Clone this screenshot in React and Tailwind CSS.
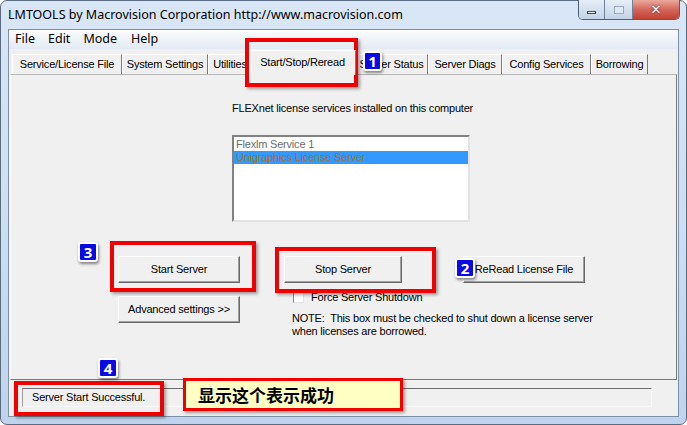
import React from 'react';

const Badge = ({ n, className }) => (
  <div
    className={`absolute flex items-center justify-center rounded-[3px] border-2 border-white bg-[#0a0ae6] text-[15px] font-bold leading-none text-white shadow-[1px_2px_3px_rgba(0,0,0,0.45)] ${className}`}
  >
    {n}
  </div>
);

const RedBox = ({ className }) => (
  <div
    className={`pointer-events-none absolute border-[4px] border-[#f00000] shadow-[2px_2px_3px_rgba(0,0,0,0.35)] ${className}`}
  />
);

const Button = ({ children, className = '' }) => (
  <div
    className={`flex h-[27px] shrink-0 items-center justify-center whitespace-nowrap border border-b-[#696969] border-l-white border-r-[#696969] border-t-white bg-[#f0f0f0] shadow-[inset_-1px_-1px_0_#a0a0a0] ${className}`}
  >
    {children}
  </div>
);

const App = () => {
  const tabs = [
    { label: 'Service/License File', w: 'w-[110px]' },
    { label: 'System Settings', w: 'w-[86px]' },
    { label: 'Utilities', w: 'w-[44px]' },
    { label: 'Start/Stop/Reread', w: 'w-[107px]', active: true },
    { label: 'Server Status', w: 'w-[73px]' },
    { label: 'Server Diags', w: 'w-[74px]' },
    { label: 'Config Services', w: 'w-[89px]' },
    { label: 'Borrowing', w: 'w-[57px]' },
  ];

  return (
    <div className="relative h-[425px] w-[687px] overflow-hidden bg-white">
      {/* Window frame */}
      <div className="flex h-full flex-col rounded-[7px] border border-[#5b6b80] bg-gradient-to-b from-[#d9e6f6] via-[#cddff3] to-[#bfd3ec] px-[7px] pb-[7px]">
        {/* Title bar */}
        <div className="relative flex h-[28px] items-center">
          <span className="text-[12.5px] text-black [font-family:'Noto_Sans',sans-serif]">
            LMTOOLS by Macrovision Corporation http://www.macrovision.com
          </span>
          <div className="absolute right-[-1px] top-[-1px] flex h-[20px] overflow-hidden rounded-b-[5px] border border-t-0 border-[#4f6079]">
            <div className="flex w-[26px] items-end justify-center border-r border-[#6f819b] bg-gradient-to-b from-[#e6eef8] to-[#c3d3e7] pb-[5px]">
              <div className="h-[3px] w-[9px] border border-[#3b4a60] bg-white" />
            </div>
            <div className="flex w-[28px] items-center justify-center border-r border-[#6f819b] bg-gradient-to-b from-[#e6eef8] to-[#c3d3e7]">
              <div className="h-[8px] w-[10px] border border-[#9aa9bd] bg-[#dfe7f1]" />
            </div>
            <div className="flex w-[46px] items-center justify-center bg-gradient-to-b from-[#e9a99c] via-[#d4665a] to-[#c2402f] text-[13px] font-bold leading-none text-white [font-family:'DejaVu_Sans',sans-serif] [text-shadow:0_0_2px_#5a1a10]">
              ✕
            </div>
          </div>
        </div>

        {/* Client area */}
        <div className="flex flex-1 flex-col border border-[#7e90a8] bg-[#f0f0f0] text-[11px] tracking-[-0.2px] text-black [font-family:'Liberation_Sans',Arial,sans-serif]">
          {/* Menu bar */}
          <div className="flex h-[19px] items-center gap-[13px] bg-gradient-to-b from-[#fbfcfe] to-[#e3eaf4] pl-[6px] text-[12.5px] tracking-normal [font-family:'Noto_Sans',sans-serif]">
            <span>File</span>
            <span>Edit</span>
            <span className="mr-[1px]">Mode</span>
            <span>Help</span>
          </div>

          {/* Tab strip */}
          <div className="flex h-[25px] items-end pl-[3px]">
            {tabs.map((t) =>
              t.active ? (
                <div
                  key={t.label}
                  className={`relative z-10 -mb-[1px] -ml-[3px] -mr-[1px] flex h-[25px] shrink-0 items-center justify-center border border-b-0 border-l-white border-r-[#7a7a7a] border-t-white bg-[#f0f0f0] pb-[2px] ${t.w}`}
                >
                  {t.label}
                </div>
              ) : (
                <div
                  key={t.label}
                  className={`flex h-[20px] shrink-0 items-center justify-center overflow-hidden whitespace-nowrap border border-b-0 border-l-white border-r-[#7a7a7a] border-t-white bg-[#f0f0f0] ${t.w}`}
                >
                  {t.label}
                </div>
              )
            )}
          </div>

          {/* Tab panel */}
          <div className="mx-[1px] h-[306px] border border-b-[#7a7a7a] border-l-white border-r-[#7a7a7a] border-t-[#b8b8b8]">
            <div className="pl-[221px] pt-[27px]">
              <div className="leading-[13px]">FLEXnet license services installed on this computer</div>
              <div className="mt-[20px] h-[87px] w-[238px] border-2 border-b-[#e3e3e3] border-l-[#828282] border-r-[#e3e3e3] border-t-[#828282] bg-white pt-[1px] leading-[13px]">
                <div className="pl-[2px] text-[#6d6d6d]">Flexlm Service 1</div>
                <div className="bg-[#3399ff] pl-[2px] text-[#9c7434]">Unigraphics License Server</div>
              </div>
            </div>

            <div className="ml-[107px] mt-[34px] flex">
              <div className="flex w-[122px] shrink-0 flex-col gap-[13px]">
                <Button>Start Server</Button>
                <Button>Advanced settings &gt;&gt;</Button>
              </div>
              <div className="ml-[44px] flex w-[118px] shrink-0 flex-col">
                <Button>Stop Server</Button>
                <div className="ml-[9px] mt-[8px] flex items-center gap-[7px] whitespace-nowrap leading-[13px]">
                  <div className="h-[11px] w-[11px] shrink-0 border border-b-[#e3e3e3] border-l-[#8a8a8a] border-r-[#e3e3e3] border-t-[#8a8a8a] bg-white" />
                  <span>Force Server Shutdown</span>
                </div>
                <div className="ml-[8px] mt-[8px] whitespace-pre leading-[13px]">
                  {'NOTE:  This box must be checked to shut down a license server\nwhen licenses are borrowed.'}
                </div>
              </div>
              <div className="ml-[61px] w-[122px] shrink-0">
                <Button>ReRead License File</Button>
              </div>
            </div>
          </div>

          {/* Status bar */}
          <div className="ml-[13px] mr-[26px] mt-[8px] flex h-[19px] items-center border border-b-[#f8f8f8] border-l-[#a0a0a0] border-r-[#f8f8f8] border-t-[#6e6e6e] pl-[9px]">
            Server Start Successful.
          </div>
        </div>
      </div>

      {/* Annotations */}
      <RedBox className="left-[245px] top-[38px] h-[49px] w-[113px]" />
      <Badge n="1" className="left-[363px] top-[51px] h-[20px] w-[19px]" />
      <Badge n="3" className="left-[78px] top-[242px] h-[20px] w-[20px]" />
      <RedBox className="left-[110px] top-[241px] h-[51px] w-[146px]" />
      <RedBox className="left-[275px] top-[247px] h-[46px] w-[161px]" />
      <Badge n="2" className="left-[455px] top-[258px] h-[20px] w-[20px]" />
      <Badge n="4" className="left-[98px] top-[358px] h-[20px] w-[20px]" />
      <RedBox className="left-[14px] top-[381px] h-[35px] w-[150px]" />
      <div className="absolute left-[183px] top-[378px] flex h-[33px] w-[220px] items-center border-[3px] border-[#f00000] bg-[#ffffc4] pl-[12px] text-[17px] font-bold text-black shadow-[2px_2px_3px_rgba(0,0,0,0.35)] [font-family:'Noto_Sans_CJK_SC',sans-serif]">
        显示这个表示成功
      </div>
    </div>
  );
};

export default App;
